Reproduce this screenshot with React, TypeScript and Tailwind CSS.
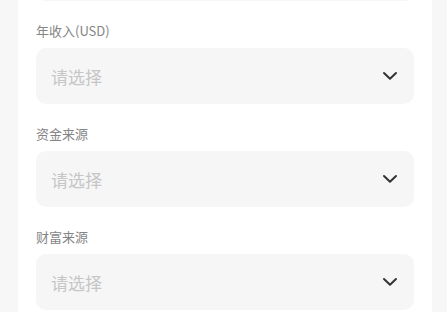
import React from "react";

const font = { fontFamily: '"Noto Sans CJK SC", "Noto Sans", sans-serif' };

function Chevron() {
  return (
    <svg width="16" height="10" viewBox="0 0 16 10" fill="none">
      <path d="M2 2 L8 7.8 L14 2" stroke="#333" strokeWidth="2" strokeLinecap="round" strokeLinejoin="round" />
    </svg>
  );
}

function SelectBox() {
  return (
    <div className="h-[56px] rounded-[10px] bg-[#f6f6f6] flex items-center justify-between pl-[15px] pr-[16px]">
      <span className="text-[17px] text-[#c6c6c6] leading-none">请选择</span>
      <Chevron />
    </div>
  );
}

function Field({ label }: { label: string }) {
  return (
    <div className="pt-[20.5px] flex flex-col">
      <div className="text-[13px] leading-[17px] text-[#858585] mb-[9.5px]">{label}</div>
      <SelectBox />
    </div>
  );
}

export default function App() {
  return (
    <div className="w-[447px] h-[312px] overflow-hidden bg-[#f7f7f7]" style={font}>
      <div className="ml-[18px] w-[414px] bg-white px-[18px] -mt-[55px]">
        <div className="h-[56px] rounded-[10px] bg-[#f6f6f6]" />
        <Field label="年收入(USD)" />
        <Field label="资金来源" />
        <Field label="财富来源" />
        <div className="h-[40px]" />
      </div>
    </div>
  );
}
